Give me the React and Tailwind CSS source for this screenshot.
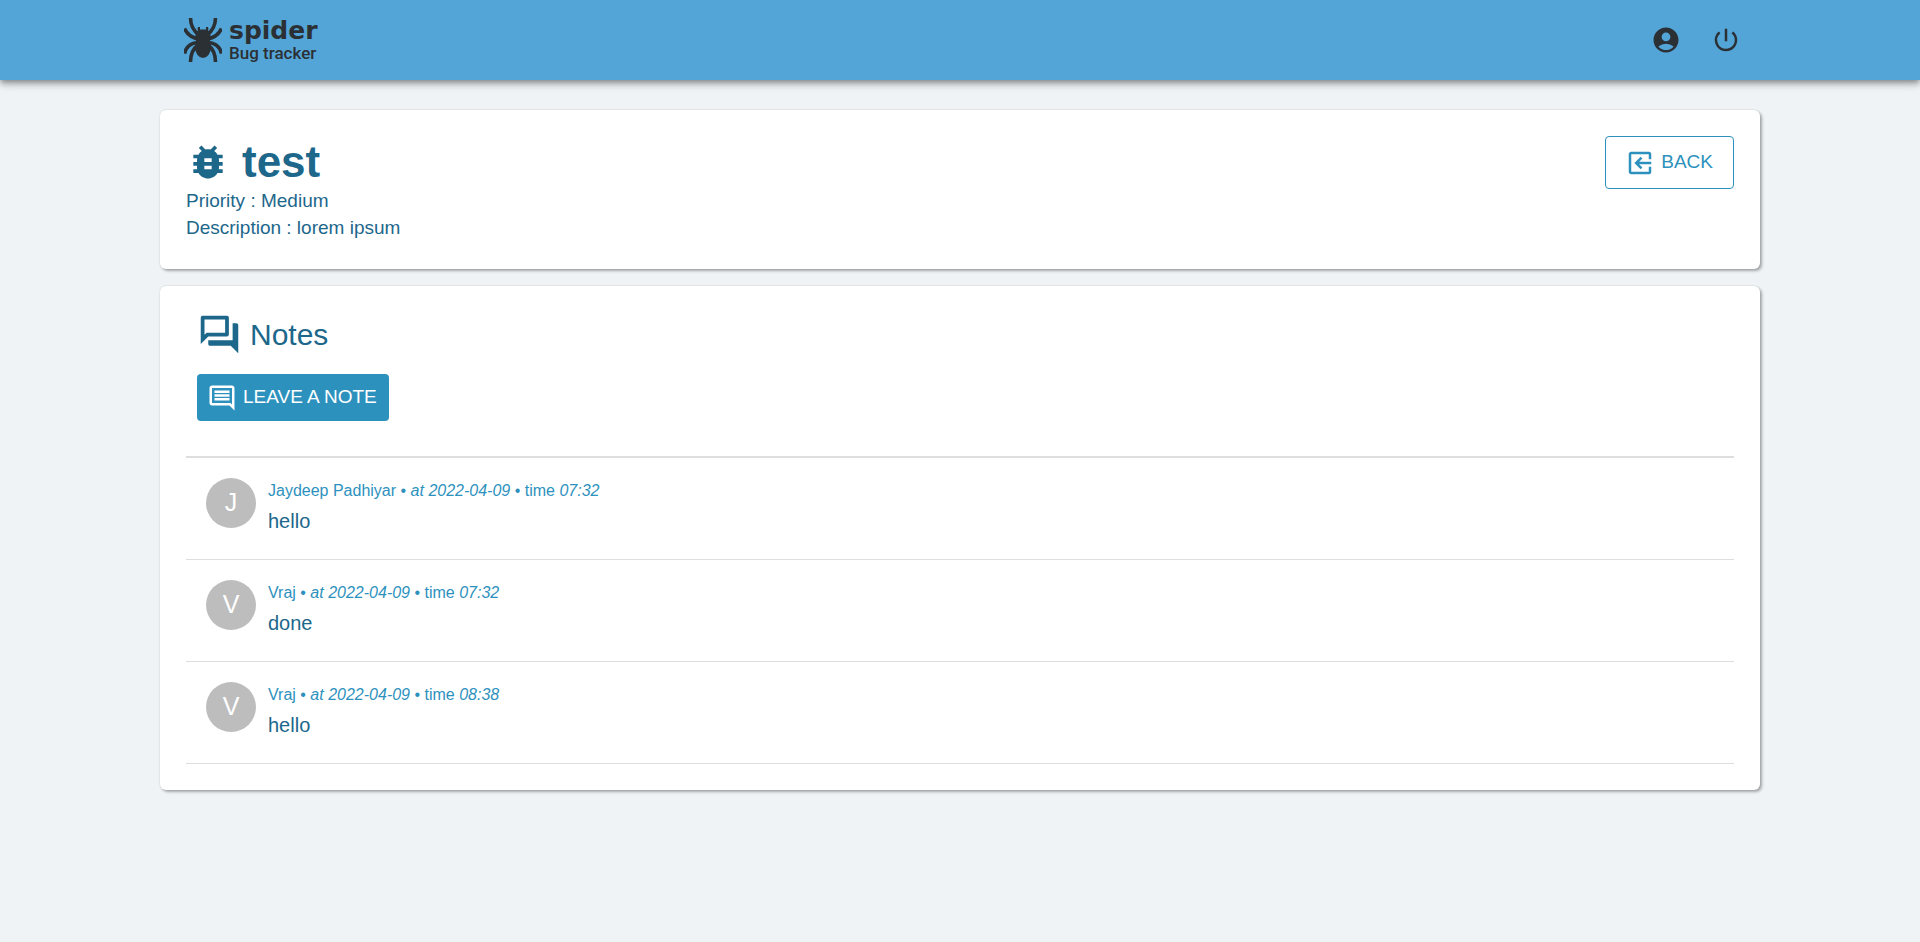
import React from "react";
import {
  MdAccountCircle,
  MdBugReport,
  MdExitToApp,
  MdOutlineComment,
  MdOutlineForum,
  MdPowerSettingsNew,
} from "react-icons/md";

const notes = [
  { id: 1, author: "Jaydeep Padhiyar", date: "2022-04-09", time: "07:32", body: "hello" },
  { id: 2, author: "Vraj", date: "2022-04-09", time: "07:32", body: "done" },
  { id: 3, author: "Vraj", date: "2022-04-09", time: "08:38", body: "hello" },
];

function SpiderIcon() {
  return (
    <svg viewBox="0 0 38 44" className="h-11 w-[38px] shrink-0" aria-hidden="true">
      <g fill="none" stroke="currentColor" strokeWidth="3.6">
        <path d="M6.500 0C6.500 7 8.500 12 15 17" />
        <path d="M31.500 0C31.500 7 29.500 12 23 17" />
        <path d="M0.500 10.500C3 16 8 20 15 21" />
        <path d="M37.500 10.500C35 16 30 20 23 21" />
        <path d="M0.500 35.500C2 29 7 25 14 24.500" />
        <path d="M37.500 35.500C36 29 31 25 24 24.500" />
        <path d="M6.500 44C6.500 36 8.500 31 14 27" />
        <path d="M31.500 44C31.500 36 29.500 31 24 27" />
      </g>
      <g fill="currentColor">
        <ellipse cx="19" cy="29" rx="8" ry="11" />
        <path d="M12 23c-1.500-4-.5-8.500 2-10.500-.5-1-.5-2.300 0-3.500h2v2.500h6V9h2c.5 1.200.5 2.500 0 3.500 2.500 2 3.500 6.500 2 10.500z" />
      </g>
    </svg>
  );
}

function Card({ children }) {
  return (
    <section className="rounded-md bg-white p-[26px] shadow-[2px_2px_3px_rgba(0,0,0,0.3),0_0_2px_rgba(0,0,0,0.15)]">
      {children}
    </section>
  );
}

function Note({ note }) {
  return (
    <li className="flex gap-3 border-b border-[#dedede] px-5 pt-5 pb-[23px]">
      <div className="flex size-[50px] shrink-0 items-center justify-center rounded-full bg-[#bdbdbd] text-[25px] text-white">
        {note.author[0]}
      </div>
      <div>
        <p className="text-base leading-[26px] text-[#2d91bd]">
          {note.author} • <em>at {note.date}</em> • time <em>{note.time}</em>
        </p>
        <p className="mt-[2px] text-xl leading-[30px] text-[#1d678b]">{note.body}</p>
      </div>
    </li>
  );
}

export default function App() {
  return (
    <div className="min-h-screen bg-[#eff3f6] font-['Liberation_Sans',Arial,sans-serif] text-[#1d678b]">
      <header className="bg-[#54a5d7] text-[#2b3035] shadow-[0_2px_5px_-1px_rgba(0,0,0,0.3),0_5px_6px_rgba(0,0,0,0.18),0_1px_12px_rgba(0,0,0,0.14)]">
        <div className="mx-auto flex h-20 max-w-[1600px] items-center justify-between pr-[19px] pl-6">
          <a href="#" className="flex items-center gap-[7px]">
            <SpiderIcon />
            <span className="flex flex-col pt-[2px]">
              <span className="font-['DejaVu_Sans',sans-serif] text-[25px] leading-6 font-bold">spider</span>
              <span className="font-[Roboto,sans-serif] text-[17px] leading-5 font-medium">Bug tracker</span>
            </span>
          </a>
          <nav className="flex gap-[30px]">
            <button type="button" aria-label="Account">
              <MdAccountCircle size={30} />
            </button>
            <button type="button" aria-label="Log out">
              <MdPowerSettingsNew size={30} />
            </button>
          </nav>
        </div>
      </header>

      <main className="mx-auto flex max-w-[1600px] flex-col gap-[17px] pt-[30px]">
        <Card>
          <div className="flex items-start justify-between">
            <div className="pb-[2px]">
              <h1 className="flex items-center gap-3 text-[44px] leading-[51px] font-bold">
                <MdBugReport size={44} />
                test
              </h1>
              <p className="text-[19px] leading-[27px]">Priority : Medium</p>
              <p className="text-[19px] leading-[27px]">Description : lorem ipsum</p>
            </div>
            <button
              type="button"
              className="flex h-[53px] items-center gap-[6px] rounded border border-[#2d91bd] pr-5 pl-[19px] text-[19px] text-[#2d91bd]"
            >
              <MdExitToApp size={30} className="-scale-x-100" />
              BACK
            </button>
          </div>
        </Card>

        <Card>
          <h2 className="flex items-center gap-2 pl-[11px] text-[30px] leading-[44px]">
            <MdOutlineForum size={45} />
            Notes
          </h2>
          <button
            type="button"
            className="mt-[17px] ml-[11px] flex h-[47px] items-center gap-[6px] rounded bg-[#2d91bd] pr-3 pl-[10px] text-[19px] text-white"
          >
            <MdOutlineComment size={30} />
            LEAVE A NOTE
          </button>
          <ul className="mt-[35px] border-t-2 border-[#dedede]">
            {notes.map((note) => (
              <Note key={note.id} note={note} />
            ))}
          </ul>
        </Card>
      </main>
    </div>
  );
}
